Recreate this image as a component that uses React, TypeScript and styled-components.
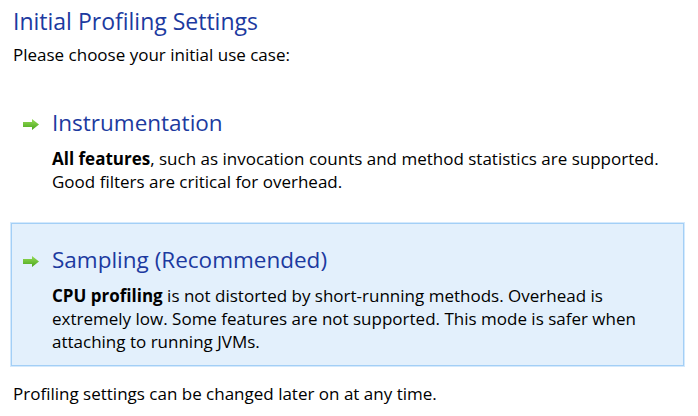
import React from "react";
import styled, { createGlobalStyle } from "styled-components";

const Global = createGlobalStyle`
  html, body { margin: 0; padding: 0; background: #ffffff; }
  body { font-family: "Open Sans", "Segoe UI", sans-serif; color: #000; }
`;

const Page = styled.div`
  width: 698px;
  height: 416px;
  box-sizing: border-box;
  padding: 6px 14px 0 11px;
  display: flex;
  flex-direction: column;
`;

const Title = styled.h1`
  margin: 0 0 0 2px;
  font-size: 23px;
  line-height: 30px;
  font-weight: 400;
  color: #1c3aa0;
`;

const Intro = styled.p`
  margin: 7px 0 0 2px;
  font-size: 17px;
  line-height: 23px;
`;

const Options = styled.div`
  margin-top: 20px;
  display: flex;
  flex-direction: column;
  gap: 17px;
`;

const Option = styled.div<{ $selected?: boolean }>`
  box-sizing: border-box;
  border: 1px solid ${(p) => (p.$selected ? "#a3cff6" : "transparent")};
  box-shadow: ${(p) => (p.$selected ? "0 0 0 1px #d4e9fc" : "none")};
  background: ${(p) => (p.$selected ? "#e3f0fc" : "transparent")};
  padding: 20px 10px 12px 11px;
  display: grid;
  grid-template-columns: 16px 1fr;
  column-gap: 13px;
`;

const ArrowCell = styled.div`
  padding-top: 12px;
  display: flex;
`;

const Heading = styled.div`
  font-size: 22.5px;
  line-height: 32px;
  color: #1c3aa0;
`;

const Desc = styled.div`
  grid-column: 2;
  margin-top: 8px;
  font-size: 17px;
  line-height: 23px;
  color: #000;
  b { font-weight: 700; }
`;

const Footer = styled.p`
  margin: 16px 0 0 2px;
  font-size: 17px;
  line-height: 23px;
`;

const Arrow = () => (
  <svg width="16" height="11" viewBox="0 0 16 11">
    <defs>
      <linearGradient id="ag" x1="0" y1="0" x2="0" y2="1">
        <stop offset="0" stopColor="#96dc56" />
        <stop offset="1" stopColor="#4aa61c" />
      </linearGradient>
    </defs>
    <path d="M0 3 H9 V0 L16 5.5 L9 11 V8 H0 Z" fill="url(#ag)" />
  </svg>
);

export default function App() {
  return (
    <>
      <Global />
      <Page>
        <Title>Initial Profiling Settings</Title>
        <Intro>Please choose your initial use case:</Intro>
        <Options>
          <Option>
            <ArrowCell><Arrow /></ArrowCell>
            <Heading>Instrumentation</Heading>
            <Desc>
              <b>All features</b>, such as invocation counts and method statistics are supported.
              <br />
              Good filters are critical for overhead.
            </Desc>
          </Option>
          <Option $selected>
            <ArrowCell><Arrow /></ArrowCell>
            <Heading>Sampling (Recommended)</Heading>
            <Desc>
              <b>CPU profiling</b> is not distorted by short-running methods. Overhead is
              <br />
              extremely low. Some features are not supported. This mode is safer when
              <br />
              attaching to running JVMs.
            </Desc>
          </Option>
        </Options>
        <Footer>Profiling settings can be changed later on at any time.</Footer>
      </Page>
    </>
  );
}
